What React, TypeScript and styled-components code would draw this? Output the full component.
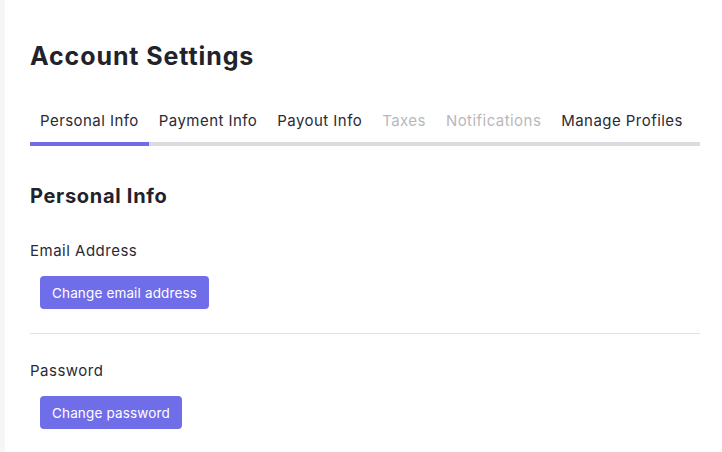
import React from "react";
import styled, { createGlobalStyle } from "styled-components";

const Global = createGlobalStyle`
  html, body { margin: 0; padding: 0; background: #ffffff; }
  body { font-family: "Inter", "Open Sans", sans-serif; color: #25252f; }
`;

const Page = styled.div`
  display: flex;
  min-height: 452px;
`;

const SideStrip = styled.div`
  width: 5px;
  background: #f6f6f7;
  flex: none;
`;

const Main = styled.main`
  flex: 1;
  padding: 38px 22px 0 25px;
`;

const Title = styled.h1`
  margin: 0;
  font-size: 25px;
  line-height: 36px;
  font-weight: 700;
  letter-spacing: 0.9px;
  color: #22222c;
`;

const Tabs = styled.nav`
  display: flex;
  margin-top: 37px;
  border-bottom: 4px solid #dcdce0;
`;

const Tab = styled.div<{ $active?: boolean; $disabled?: boolean }>`
  padding: 0 10px 11px;
  font-size: 15px;
  line-height: 20px;
  letter-spacing: 0.45px;
  color: ${(p) => (p.$disabled ? "#b8b8bc" : "#2a2a35")};
  margin-bottom: -4px;
  border-bottom: 4px solid ${(p) => (p.$active ? "#706de9" : "transparent")};
  white-space: nowrap;
`;

const SectionTitle = styled.h2`
  margin: 36px 0 4px;
  font-size: 20px;
  line-height: 28px;
  font-weight: 700;
  letter-spacing: 0.7px;
  color: #22222c;
`;

const Field = styled.div`
  display: flex;
  flex-direction: column;
  align-items: flex-start;
  padding: 27px 0 24px;
`;

const Label = styled.div`
  font-size: 15px;
  line-height: 20px;
  letter-spacing: 0.5px;
  color: #2a2a35;
`;

const Button = styled.button`
  margin: 15px 0 0 10px;
  height: 33px;
  padding: 0 12px;
  border: none;
  border-radius: 4px;
  background: #706de9;
  color: #ffffff;
  font-family: inherit;
  font-size: 13.5px;
  letter-spacing: 0.15px;
  cursor: pointer;
`;

const Divider = styled.hr`
  margin: 0;
  border: none;
  border-top: 1px solid #e2e2e4;
`;

export default function App() {
  return (
    <>
      <Global />
      <Page>
        <SideStrip />
        <Main>
          <Title>Account Settings</Title>
          <Tabs>
            <Tab $active>Personal Info</Tab>
            <Tab>Payment Info</Tab>
            <Tab>Payout Info</Tab>
            <Tab $disabled>Taxes</Tab>
            <Tab $disabled>Notifications</Tab>
            <Tab>Manage Profiles</Tab>
          </Tabs>
          <SectionTitle>Personal Info</SectionTitle>
          <Field>
            <Label>Email Address</Label>
            <Button>Change email address</Button>
          </Field>
          <Divider />
          <Field>
            <Label>Password</Label>
            <Button>Change password</Button>
          </Field>
        </Main>
      </Page>
    </>
  );
}
